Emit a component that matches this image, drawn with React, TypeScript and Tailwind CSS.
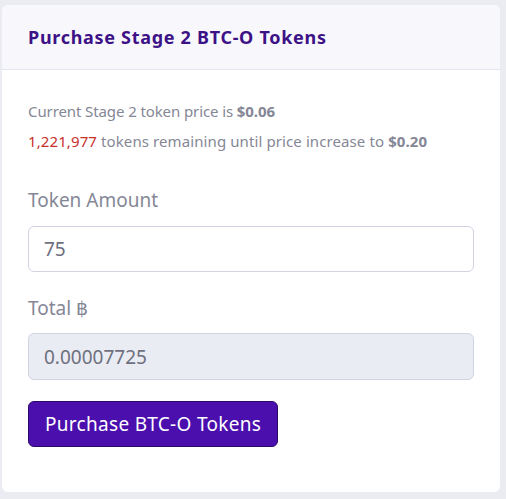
export default function App() {
  return (
    <div
      className="min-h-screen bg-[#ebecf1] pt-[5px] pl-[2px] pr-[6px]"
      style={{ fontFamily: '"Noto Sans", "Open Sans", sans-serif' }}
    >
      <div className="h-[487px] overflow-hidden rounded-md bg-white">
        {/* header */}
        <div className="flex h-[65px] items-center border-b border-[#e3e6f0] bg-[#f8f8fc] px-[26px]">
          <h2 className="text-[18px] font-bold tracking-[0.7px] text-[#3d1287]">Purchase Stage 2 BTC-O Tokens</h2>
        </div>

        {/* body */}
        <div className="px-[26px] pt-[30px]">
          <p className="text-[15px] leading-[22px] tracking-[-0.1px] text-[#858796]">
            Current Stage 2 token price is <b>$0.06</b>
          </p>
          <p className="mt-[8px] text-[15px] leading-[22px] tracking-[0.1px] text-[#858796]">
            <span className="text-[#c9302c]">1,221,977</span> tokens remaining until price increase to{' '}
            <b>$0.20</b>
          </p>

          <label className="mt-[34px] block text-[19px] leading-[28px] text-[#858796]">Token Amount</label>
          <input
            className="mt-[12px] block h-[46px] w-full rounded-md border border-[#d1d3e2] bg-white px-[15px] text-[19px] text-[#6e707e] outline-none"
            defaultValue="75"
          />

          <label className="mt-[22px] block text-[19px] leading-[28px] text-[#858796]">Total ฿</label>
          <input
            className="mt-[11px] block h-[47px] w-full rounded-md border border-[#d1d3e2] bg-[#eaecf4] px-[15px] text-[19px] text-[#6e707e] outline-none"
            value="0.00007725"
            readOnly
          />

          <button className="mt-[21px] h-[46px] rounded-md border border-[#2c0a6b] bg-[#4a0fad] px-[16px] text-[19px] tracking-[0.3px] text-white">
            Purchase BTC-O Tokens
          </button>
        </div>
      </div>
    </div>
  );
}
